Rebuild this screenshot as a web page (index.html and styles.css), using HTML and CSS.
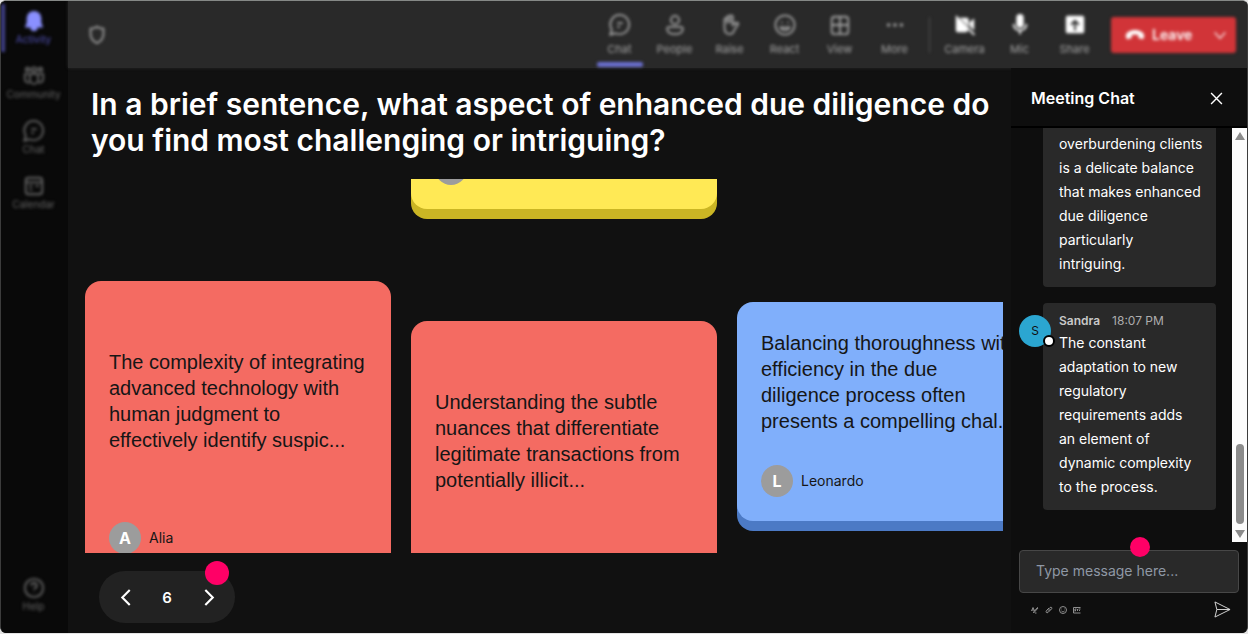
FILE: index.html
```
<!DOCTYPE html>
<html lang="en">
<head>
<meta charset="utf-8">
<title>Meeting</title>
<link rel="stylesheet" href="styles.css">
</head>
<body>
<div class="app">
  <nav class="rail" aria-label="Apps">
    <a class="rail-item active" href="#"><svg viewBox="0 0 24 24" class="icon fill"><path d="M12 1a8 8 0 0 0-8 8v5l-2 5h6a4 4 0 0 0 8 0h6l-2-5V9a8 8 0 0 0-8-8z"/></svg>Activity</a>
    <a class="rail-item" href="#"><svg viewBox="0 0 24 24" class="icon"><circle cx="12" cy="5" r="2.500"/><circle cx="5" cy="5" r="2"/><circle cx="19" cy="5" r="2"/><path d="M7.500 10h9v6a4.500 4.500 0 0 1-9 0zM6 10H2v5a4 4 0 0 0 5 4M18 10h4v5a4 4 0 0 1-5 4"/></svg>Community</a>
    <a class="rail-item" href="#"><svg viewBox="0 0 24 24" class="icon"><path d="M12 1a10.500 10.500 0 1 1-5 20L1.500 22.500 3 17A10.500 10.500 0 0 1 12 1zM9 10h6M9 14h3"/></svg>Chat</a>
    <a class="rail-item" href="#"><svg viewBox="0 0 24 24" class="icon"><rect x="3" y="3" width="18" height="18" rx="3"/><path d="M3 8h18M7 12h3M14 12h3M7 16h3"/></svg>Calendar</a>
    <a class="rail-item help" href="#"><svg viewBox="0 0 24 24" class="icon"><circle cx="12" cy="12" r="10"/><path d="M9 9.500a3 3 0 1 1 3.500 3c-.5.300-.5.800-.5 1.500M12 17v.5"/></svg>Help</a>
  </nav>

  <header class="topbar">
    <svg viewBox="0 0 24 24" class="icon shield"><path d="M12 3c2 1.500 4 2 7 2v6c0 5-3 8-7 10-4-2-7-5-7-10V5c3 0 5-.5 7-2z"/></svg>
    <div class="tools">
      <button class="tool selected"><svg viewBox="0 0 24 24" class="icon"><path d="M12 1a10.500 10.500 0 1 1-5 20L1.500 22.500 3 17A10.500 10.500 0 0 1 12 1zM9 10h6M9 14h3"/></svg>Chat</button>
      <button class="tool"><svg viewBox="0 0 24 24" class="icon"><circle cx="12" cy="6.500" r="4.500"/><path d="M6 14h12a2.500 2.500 0 0 1 2.500 2.500c0 3.500-4 5.500-8.500 5.500s-8.500-2-8.500-5.500A2.500 2.500 0 0 1 6 14z"/></svg>People</button>
      <button class="tool"><svg viewBox="0 0 24 24" class="icon"><path d="M6 12V6a1.500 1.500 0 0 1 3 0V3.500a1.500 1.500 0 0 1 3 0V3a1.500 1.500 0 0 1 3 0v9l3-2c2-1 3 0 3 1l-4 6c-1 3-3 5-5 5-4 0-6-3-6-7zM9 5v5M12 4v6"/></svg>Raise</button>
      <button class="tool"><svg viewBox="0 0 24 24" class="icon"><circle cx="12" cy="12" r="10.500"/><path d="M7 14.500c2 4 8 4 10 0zM8.500 8.500v1.500M15.500 8.500v1.500"/></svg>React</button>
      <button class="tool"><svg viewBox="0 0 24 24" class="icon"><rect x="3" y="3" width="18" height="19" rx="3"/><path d="M12 3v19M3 12h18"/></svg>View</button>
      <button class="tool"><svg viewBox="0 0 24 24" class="icon fill"><circle cx="5" cy="12" r="2"/><circle cx="12" cy="12" r="2"/><circle cx="19" cy="12" r="2"/></svg>More</button>
    </div>
    <span class="divider"></span>
    <div class="tools devices">
      <button class="tool"><svg viewBox="0 0 24 24" class="icon fill"><path d="M2 1l21 21-1.500 1.500L15 17v1a2 2 0 0 1-2 2H4a2 2 0 0 1-2-2zM6 4h8a2 2 0 0 1 2 2v8zM17 9l5-4v13l-5-5z"/></svg>Camera</button>
      <button class="tool"><svg viewBox="0 0 24 24" class="icon"><rect class="solid" x="8" y="0" width="8" height="15" rx="4"/><path d="M5 11a7 7 0 0 0 14 0M12 18v4"/></svg>Mic</button>
      <button class="tool"><svg viewBox="0 0 24 24" class="icon fill"><path fill-rule="evenodd" d="M4 2h16a2 2 0 0 1 2 2v15a2 2 0 0 1-2 2H4a2 2 0 0 1-2-2V4a2 2 0 0 1 2-2zm8 4-5 5 1.500 1.500L11 10v8h2v-8l2.500 2.500L17 11z"/></svg>Share</button>
    </div>
    <div class="leave">
      <button class="leave-main"><svg viewBox="0 0 24 24" class="icon fill"><path d="M12 6c6 0 11 3 11 7 0 3-1 4-2 4l-4-1c-1 0-1-1-1-2v-2c-3-1-5-1-8 0v2c0 1 0 2-1 2l-4 1c-1 0-2-1-2-4 0-4 5-7 11-7z"/></svg>Leave</button>
      <button class="leave-more" aria-label="More leave options"><svg viewBox="0 0 24 24" class="icon"><path d="M4 8l8 9 8-9"/></svg></button>
    </div>
  </header>

  <main class="stage">
    <h1 class="question">In a brief sentence, what aspect of enhanced due diligence do you find most challenging or intriguing?</h1>
    <section class="board">
      <div class="column first">
        <article class="card tall red">
          <p class="card-text">The complexity of integrating advanced technology with human judgment to effectively identify suspic...</p>
          <div class="author"><span class="avatar">A</span>Alia</div>
        </article>
      </div>
      <div class="column second">
        <div class="card-peek">
          <article class="card yellow"><div class="author"><span class="avatar"></span></div></article>
        </div>
        <article class="card tall red">
          <p class="card-text">Understanding the subtle nuances that differentiate legitimate transactions from potentially illicit...</p>
          <div class="author"><span class="avatar"></span></div>
        </article>
      </div>
      <div class="column third">
        <article class="card blue">
          <p class="card-text">Balancing thoroughness with efficiency in the due diligence process often presents a compelling chal...</p>
          <div class="author"><span class="avatar">L</span>Leonardo</div>
        </article>
      </div>
    </section>
    <div class="pager">
      <button class="page-btn" aria-label="Previous"><svg viewBox="0 0 16 16" class="chevron"><path d="M12 1L5 8l7 7"/></svg></button>
      <span class="page">6</span>
      <button class="page-btn" aria-label="Next"><svg viewBox="0 0 16 16" class="chevron"><path d="M5 1l7 7-7 7"/></svg></button>
      <span class="hotspot on-pager"></span>
    </div>
  </main>

  <aside class="chat">
    <div class="chat-head">
      <h2>Meeting Chat</h2>
      <button class="close" aria-label="Close"><svg viewBox="0 0 12 12"><path d="M1 1l10 10M11 1L1 11"/></svg></button>
    </div>
    <div class="chat-body">
      <div class="messages">
        <article class="message"><p>overburdening clients is a delicate balance that makes enhanced due diligence<br>particularly<br>intriguing.</p></article>
        <article class="message">
          <span class="sender">S<i class="status"></i></span>
          <header class="meta"><strong>Sandra</strong><time>18:07 PM</time></header>
          <p>The constant adaptation to new regulatory requirements adds<br>an element of<br>dynamic complexity to the process.</p>
        </article>
      </div>
      <div class="scrollbar">
        <svg viewBox="0 0 10 8"><path d="M5 0l5 8H0z"/></svg>
        <span class="thumb"></span>
        <svg viewBox="0 0 10 8"><path d="M5 8L0 0h10z"/></svg>
      </div>
    </div>
    <form class="composer">
      <div class="field"><input type="text" aria-label="Message" placeholder="Type message here..."><span class="hotspot on-field"></span></div>
      <div class="actions">
        <button type="button" aria-label="Format"><svg viewBox="0 0 16 16"><path d="M1 10L4 3l3 7M2 8h4M14 4l-7 8-2 2 1-3 7-8zM8 14h3"/></svg></button>
        <button type="button" aria-label="Attach"><svg viewBox="0 0 16 16"><path d="M4 9l6-6c3-2 5 1 3 3l-7 7c-3 2-5-1-3-4l5-5M6 11l5-5"/></svg></button>
        <button type="button" aria-label="Emoji"><svg viewBox="0 0 16 16"><circle cx="8" cy="8" r="7"/><path d="M5 10c2 2 4 2 6 0M5 6h1M10 6h1"/></svg></button>
        <button type="button" aria-label="GIF"><svg viewBox="0 0 16 16"><path d="M15 3H1v11h14M4 6v5M4 6h3M4 9h2M9 6v4M11 6h4M12 9h2"/></svg></button>
        <button class="send" aria-label="Send"><svg viewBox="0 0 18 18"><path d="M1 1l16 8L1 17l2-8zM3 9h14"/></svg></button>
      </div>
    </form>
  </aside>
</div>
</body>
</html>
```
FILE: styles.css
```
* { box-sizing: border-box; }
body { margin: 0; height: 100vh; padding-bottom: 1px; background: #e4e4e4; font-family: Inter, "Liberation Sans", sans-serif; color: #fff; }
h1, h2, p { margin: 0; }
button { background: none; border: 0; padding: 0; color: inherit; font: inherit; }
svg { display: block; }

.app { height: 100%; display: grid; grid-template-columns: 67px minmax(0, 1fr) 236px; grid-template-rows: 67px minmax(0, 1fr); border: 1px solid #3c3c3c; border-top-color: #858886; border-bottom: 0; border-radius: 6px; overflow: hidden; background: #111; }
.icon { width: 22px; height: 22px; fill: none; stroke: currentColor; stroke-width: 2; }
.icon.fill, .solid { fill: currentColor; stroke: none; }

.rail { grid-row: 1 / 3; background: #090909; display: flex; flex-direction: column; gap: 7px; padding: 3px 0 14px; }
.rail-item { height: 48px; padding: 6px 2px 0 0; display: flex; flex-direction: column; align-items: center; font-size: 10px; line-height: 14px; color: #666; text-decoration: none; filter: blur(1px) blur(1px); }
.rail-item.active { color: #5252b8; border-left: 4px solid #42428a; padding-right: 6px; }
.rail-item.active .icon { color: #8a90ff; }
.rail-item.help { margin-top: auto; }

.topbar { grid-column: 2 / 4; background: #292929; box-shadow: 0 0 3px #292929; display: flex; align-items: center; padding: 0 11px 0 18px; }
.topbar > * { filter: blur(1px) blur(1px); }
.shield { color: #a0a0a0; margin-right: auto; }
.tools { display: flex; height: 100%; }
.tool { position: relative; width: 55px; padding: 13px 0 2px; display: flex; flex-direction: column; align-items: center; justify-content: flex-start; gap: 6px; font-size: 11px; line-height: 14px; color: #a4a4a4; }
.tool.selected::after { content: ""; position: absolute; bottom: 1px; width: 46px; height: 5px; background: #6b6fd0; border-radius: 2px; }
.devices .icon { color: #fff; }
.divider { width: 1px; height: 36px; margin: 0 7px; background: #505050; }
.leave { display: flex; align-items: center; width: 125px; height: 36px; margin-left: 9px; background: #d13438; border-radius: 3px; color: #fff; }
.leave-main { flex: 1; display: flex; align-items: center; gap: 7px; padding-left: 14px; font-size: 14px; font-weight: 600; }
.leave-main .icon { color: #fff; width: 20px; height: 20px; }
.leave-more { width: 32px; display: grid; place-items: center; }
.leave-more .icon { width: 16px; height: 16px; }

.stage { display: flex; flex-direction: column; align-items: flex-start; padding: 18px 8px 10px 17px; }
.question { padding-left: 6px; font-size: 30px; line-height: 36px; font-weight: 600; }
.board { flex: 1; align-self: stretch; min-height: 0; margin-top: 21px; display: flex; gap: 20px; overflow: hidden; }
.column { flex: 0 0 306px; display: flex; flex-direction: column; }
.first { padding-top: 102px; }
.second { gap: 102px; }
.third { padding-top: 123px; }
.card { flex: none; min-height: 219px; padding: 24px; border-radius: 16px; display: flex; flex-direction: column; font-family: "Liberation Sans", Arial, sans-serif; color: #161616; }
.card-text { margin: auto 0; padding-bottom: 27px; font-size: 20px; line-height: 26px; }
.tall { min-height: 297px; }
.tall .card-text { padding-bottom: 25px; }
.red { background: #f46b62; box-shadow: 0 10px 0 #c14740; }
.blue { background: #80affb; box-shadow: 0 10px 0 #4c7ac5; }
.yellow { flex: 1; justify-content: flex-end; background: #ffe955; box-shadow: 0 10px 0 #cab524; }
.card-peek { flex: none; height: 40px; padding-bottom: 10px; display: flex; align-items: flex-end; overflow: hidden; }
.author { display: flex; align-items: center; gap: 8px; font-family: Inter, sans-serif; font-size: 14px; line-height: 16px; }
.avatar { width: 32px; height: 32px; border-radius: 50%; display: grid; place-items: center; background: #9c9c9c; color: #fff; font-size: 16px; font-weight: 700; }

.pager { position: relative; width: 136px; height: 52px; margin: 18px 0 0 14px; padding: 0 16px; border-radius: 26px; background: #222; display: flex; align-items: center; justify-content: space-between; }
.page-btn { width: 20px; display: grid; place-items: center; }
.chevron { width: 17px; height: 17px; fill: none; stroke: #fff; stroke-width: 2; }
.page { font-size: 15px; font-weight: 600; }
.hotspot { position: absolute; border-radius: 50%; background: #ff0066; }
.on-pager { width: 24px; height: 24px; top: -10px; right: 6px; }

.chat { background: #0e0e0e; display: flex; flex-direction: column; min-height: 0; }
.chat-head { height: 60px; padding: 2px 24px 0 20px; display: flex; align-items: center; justify-content: space-between; border-bottom: 2px solid #000; }
.chat-head h2 { font-size: 16px; line-height: 24px; font-weight: 600; }
.close svg { width: 13px; height: 13px; fill: none; stroke: #fff; stroke-width: 1.300; }
.chat-body { flex: 1; min-height: 0; display: flex; }
.messages { flex: 1; display: flex; flex-direction: column; justify-content: flex-end; gap: 16px; padding: 0 16px 32px 32px; overflow: hidden; }
.message { position: relative; flex: none; padding: 8px 12px 11px 16px; border-radius: 4px; background: #292929; font-size: 14px; line-height: 24px; }
.meta { display: flex; gap: 12px; font-size: 12px; line-height: 20px; color: #c8c8c8; }
.meta time { color: #adadad; }
.meta strong { font-weight: 600; }
.sender { position: absolute; left: -24px; top: 12px; width: 32px; height: 32px; border-radius: 50%; display: grid; place-items: center; background: #2ba6d1; color: #111; font-size: 12px; }
.status { position: absolute; right: -4px; bottom: 0; width: 12px; height: 12px; border: 2px solid #000; border-radius: 50%; background: #fff; }
.scrollbar { width: 15px; background: #fcfcfc; display: flex; flex-direction: column; align-items: center; padding: 4px 0; }
.scrollbar svg { width: 10px; height: 8px; fill: #8b8b8b; }
.thumb { width: 8px; height: 80px; margin: auto 0 6px; border-radius: 4px; background: #8b8b8b; }
.composer { padding: 8px 8px 15px; }
.field { position: relative; }
.field input { display: block; width: 100%; height: 43px; padding: 0 16px 2px; border: 1px solid #474747; border-radius: 4px; background: #292929; color: #fff; font: 14px/20px Inter, sans-serif; }
.field input::placeholder { color: #8f98a5; opacity: 1; }
.on-field { width: 20px; height: 20px; top: -13px; left: 111px; }
.actions { display: flex; align-items: center; gap: 6px; padding: 8px 8px 0 12px; color: #8e8e8e; }
.actions svg { width: 8px; height: 8px; fill: none; stroke: currentColor; stroke-width: 2; }
.actions .send { margin-left: auto; color: #ddd; }
.actions .send svg { width: 17px; height: 17px; stroke-width: 1; }
```
